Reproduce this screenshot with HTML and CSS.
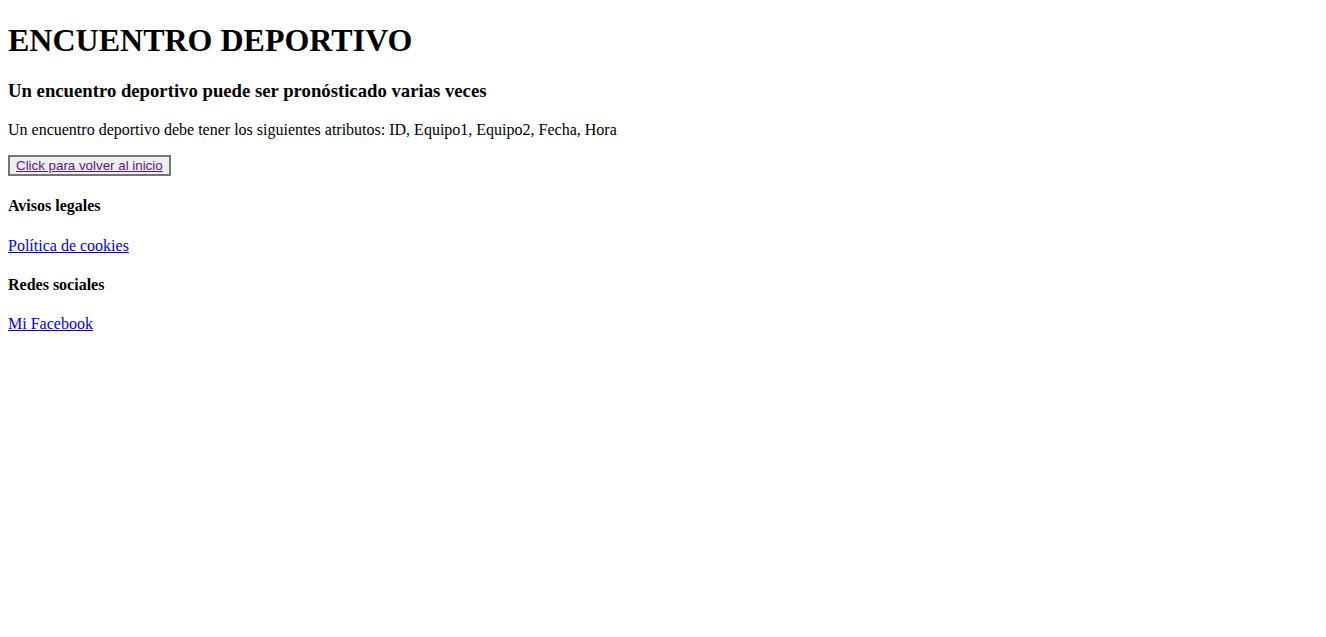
FILE: index.html
```html
<!DOCTYPE html>
<html lang="es">
<head>
<meta charset="utf-8">
<title>Encuentro deportivo</title>
<link rel="stylesheet" href="styles.css">
</head>
<body class="page">
<h1 class="title">ENCUENTRO DEPORTIVO</h1>
<h3 class="subtitle">Un encuentro deportivo puede ser pronósticado varias veces</h3>
<p class="text">Un encuentro deportivo debe tener los siguientes atributos: ID, Equipo1, Equipo2, Fecha, Hora</p>
<button class="back-btn"><a class="back-link" href="#">Click para volver al inicio</a></button>
<footer class="footer">
<h4 class="footer-title">Avisos legales</h4>
<p class="text"><a class="link" href="#cookies">Política de cookies</a></p>
<h4 class="footer-title">Redes sociales</h4>
<p class="text"><a class="link" href="#facebook">Mi Facebook</a></p>
</footer>
</body>
</html>
```
FILE: styles.css
```css
html {
  background: #ffffff;
}
.page {
  margin: 8px;
  font-family: "Liberation Serif", "Times New Roman", serif;
  font-size: 16px;
  color: #000000;
}
.title {
  font-size: 32px;
  font-weight: bold;
  margin: 14px 0 21.44px;
}
.subtitle {
  font-size: 18.72px;
  font-weight: bold;
  margin: 18.72px 0;
}
.text {
  margin: 16px 0;
}
.back-btn {
  font-family: "Liberation Sans", Arial, sans-serif;
  font-size: 13.333px;
  background: #efefef;
  border: 2px solid #767676;
  border-radius: 0;
  padding: 1px 6px;
  margin: 0;
  color: #000;
}
.back-link {
  color: #551a8b;
}
.footer-title {
  font-size: 16px;
  font-weight: bold;
  margin: 21.28px 0;
}
.link {
  color: #0000ee;
}
```
